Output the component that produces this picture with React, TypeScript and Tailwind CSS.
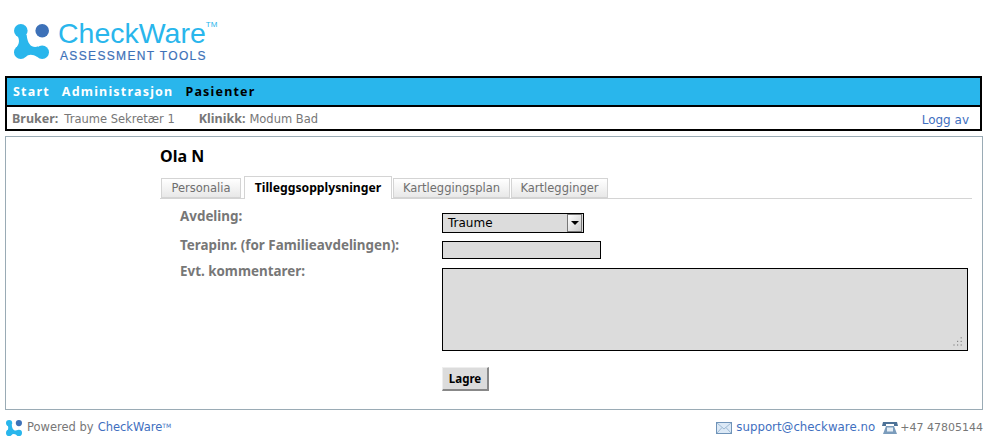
const font = "font-['DejaVu_Sans',sans-serif]";
const boldFont = "font-['Noto_Sans',sans-serif] font-bold";

function LogoMark({ className }: { className: string }) {
  return (
    <svg viewBox="0 0 36 36" className={className}>
      <circle cx="7" cy="7" r="7" fill="#29b6ec" />
      <circle cx="7" cy="29" r="7" fill="#29b6ec" />
      <circle cx="29" cy="29" r="7" fill="#29b6ec" />
      <path
        d="M3 11 C6 16 6 20 2 25 L12 34 C15 31 19 31 24 34 L25 23 C19 25 14 22 13 11 Z"
        fill="#29b6ec"
      />
      <circle cx="29" cy="7" r="7" fill="#3d71b8" />
    </svg>
  );
}

function Tab({ label, width, active }: { label: string; width: string; active?: boolean }) {
  if (active) {
    return (
      <div className={`${width} ${boldFont} -mb-px -mt-[2px] mr-[1px] flex h-[23px] items-center justify-center border border-b-0 border-[#d4d4d4] bg-white pt-[1px] text-[12.2px] text-black`}>
        {label}
      </div>
    );
  }
  return (
    <div className={`${width} mr-[1px] flex h-[20px] items-center justify-center border border-[#d4d4d4] bg-gradient-to-b from-white to-[#e8e8e8] pt-[1px] text-[11.5px] text-[#6f6f6f]`}>
      {label}
    </div>
  );
}

export default function App() {
  return (
    <div className={`${font} h-[440px] w-[987px] overflow-hidden bg-white`}>
      <div className="flex h-[76px] items-start pl-[14px] pt-[24px]">
        <LogoMark className="h-[35px] w-[35px]" />
        <div className="ml-[9px] -mt-[4px] flex flex-col">
          <div className="flex h-[29px] items-start font-['Liberation_Sans',sans-serif] text-[28.5px] leading-[26px] text-[#29b6ec]">
            <span>CheckWare</span>
            <span className="mt-[1px] text-[8px] leading-[8px]">TM</span>
          </div>
          <div className="ml-[2px] font-['Liberation_Sans',sans-serif] text-[12px] leading-[14px] tracking-[1.35px] text-[#3d71b8] [-webkit-text-stroke:0.2px_#3d71b8]">
            ASSESSMENT TOOLS
          </div>
        </div>
      </div>

      <div className="mx-[5px] w-[977px] border-2 border-black">
        <div className={`${boldFont} flex h-[27px] items-center gap-[12px] bg-[#29b6ec] pl-[6px] pt-[1px] text-[12.5px] tracking-[1.2px] text-white`}>
          <span>Start</span>
          <span>Administrasjon</span>
          <span className="text-black">Pasienter</span>
        </div>
      </div>
      <div className="mx-[5px] -mt-px flex h-[25px] w-[977px] items-center border-x-2 border-b-2 border-t border-black pl-[5px] pr-[11px] pt-[3px] text-[11.5px] text-[#777]">
        <b className={`${boldFont} mr-[5px] text-[12.5px]`}>Bruker:</b>
        <span className="ml-[1px]">Traume Sekretær 1</span>
        <b className={`${boldFont} ml-[24px] mr-[4px] text-[12.5px]`}>Klinikk:</b>
        <span>Modum Bad</span>
        <a className="ml-auto text-[12px] text-[#3f6fc0]">Logg av</a>
      </div>

      <div className="mx-[5px] mt-[5px] h-[274px] w-[978px] border border-[#9aabb5] pl-[154px] pr-[10px] pt-[9px]">
        <h1 className={`${boldFont} text-[16px] leading-[20px] text-black`}>Ola N</h1>
        <div className="mt-[13px] flex h-[20px] items-end border-b border-[#d4d4d4]">
          <Tab label="Personalia" width="w-[80px] ml-[1px]" />
          <Tab label="Tilleggsopplysninger" width="w-[148px] ml-[2px]" active />
          <Tab label="Kartleggingsplan" width="w-[117px]" />
          <Tab label="Kartlegginger" width="w-[97px]" />
        </div>
        <div className="mt-[14px] flex">
          <div className={`${boldFont} w-[282px] pl-[20px] text-[13.4px] text-[#777]`}>
            <div className="-mt-[5px] h-[29px] leading-[16px]">Avdeling:</div>
            <div className="h-[26px] leading-[16px]">Terapinr. (for Familieavdelingen):</div>
            <div className="leading-[16px]">Evt. kommentarer:</div>
          </div>
          <div className="flex flex-col">
            <div className="flex h-[20px] w-[142px] items-center justify-between border border-black bg-[#dcdcdc] pl-[5px] pr-[1px] text-[12px] text-black">
              Traume
              <span className="flex h-[18px] w-[15px] items-center justify-center border border-[#777] bg-gradient-to-br from-[#fff] to-[#ccc]">
                <span className="h-0 w-0 border-x-[4px] border-t-[4px] border-x-transparent border-t-black" />
              </span>
            </div>
            <div className="mt-[8px] h-[18px] w-[159px] border border-black bg-[#dcdcdc]" />
            <div className="relative mt-[9px] h-[83px] w-[526px] border border-black bg-[#dcdcdc]">
              <svg viewBox="0 0 10 10" className="absolute bottom-[2px] right-[4px] h-[12px] w-[12px]">
                <g fill="#888">
                  <rect x="8" y="1" width="1" height="1" />
                  <rect x="5" y="4" width="1" height="1" />
                  <rect x="8" y="4" width="1" height="1" />
                  <rect x="2" y="7" width="1" height="1" />
                  <rect x="5" y="7" width="1" height="1" />
                  <rect x="8" y="7" width="1" height="1" />
                </g>
              </svg>
            </div>
            <button className={`${boldFont} mt-[16px] flex h-[24px] w-[47px] items-center justify-center border border-b-2 border-r-2 border-b-[#888] border-l-[#eee] border-r-[#888] border-t-[#eee] bg-[#dcdcdc] text-[11.5px] text-black`}>
              Lagre
            </button>
          </div>
        </div>
      </div>

      <div className="mt-[9px] flex items-center justify-between pl-[6px] pr-[4px] text-[11.5px] text-[#777]">
        <div className="flex items-center">
          <LogoMark className="h-[16px] w-[16px]" />
          <span className="ml-[5px]">Powered by</span>
          <span className="ml-[4px] text-[#3f6fc0]">CheckWare</span>
          <span className="mb-[5px] text-[6px] text-[#3f6fc0]">TM</span>
        </div>
        <div className="flex items-center">
          <svg viewBox="0 0 16 12" className="h-[12px] w-[16px]">
            <rect x="0.5" y="0.5" width="15" height="11" fill="#dce9f6" stroke="#6f93b8" />
            <path d="M1 1 L8 7 L15 1 M1 11 L6 5.5 M15 11 L10 5.5" fill="none" stroke="#9db9d4" />
          </svg>
          <span className="ml-[4px] w-[139px] whitespace-nowrap text-[11.8px] text-[#3f6fc0]">support@checkware.no</span>
          <svg viewBox="0 0 16 14" className="ml-[7px] h-[14px] w-[16px]">
            <path d="M1 1 H15 L16 5 H12 V3 H4 V5 H0 Z" fill="#4d7297" />
            <path d="M4 5 H12 L15 13 H1 Z" fill="#7b9cbc" />
            <rect x="5" y="6.5" width="6" height="4" fill="#e6eef5" />
          </svg>
          <span className="ml-[2px] text-[11px]">+47 47805144</span>
        </div>
      </div>
    </div>
  );
}
